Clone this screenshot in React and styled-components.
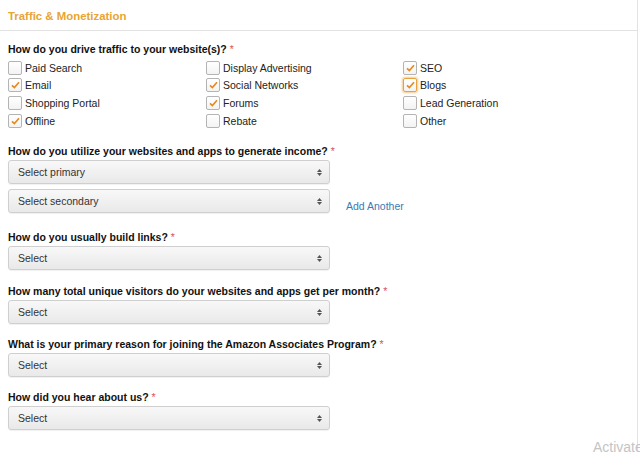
import styled, { createGlobalStyle } from "styled-components";

const GlobalStyle = createGlobalStyle`
  html, body {
    margin: 0;
    padding: 0;
    background: #fff;
    font-family: "Liberation Sans", Arial, sans-serif;
  }
`;

const Page = styled.div`
  position: relative;
  width: 640px;
  height: 452px;
  overflow: hidden;
  background: #fff;
`;

const Panel = styled.div`
  width: 637px;
  height: 452px;
  border-right: 1px solid #e2e2e2;
`;

const Header = styled.div`
  height: 31px;
  border-bottom: 1px solid #e3e3e3;
  display: flex;
  align-items: center;
  padding: 1px 8px 0;
  font-size: 11.4px;
  font-weight: bold;
  color: #e8a531;
  box-sizing: border-box;
`;

const Body = styled.div`
  padding: 11px 8px 0;
`;

const Group = styled.div`
  margin-top: ${(p) => p.$gap || 0}px;
`;

const Question = styled.div`
  font-size: 10.5px;
  font-weight: bold;
  color: #111;
  line-height: 14px;
  margin-bottom: ${(p) => p.$mb ?? 2}px;
`;

const Star = styled.span`
  color: #d9534f;
  font-weight: normal;
  margin-left: 3px;
`;

const CheckGrid = styled.div`
  display: grid;
  grid-template-columns: 198px 197px auto;
  grid-auto-rows: 17.6px;
`;

const CheckItem = styled.label`
  display: flex;
  align-items: center;
  gap: 3px;
  font-size: 10.5px;
  color: #222;
`;

const Box = styled.span`
  width: 12px;
  height: 12px;
  border: 1px solid ${(p) => (p.$focus ? "#e8a13c" : "#b4b4b4")};
  border-radius: 2px;
  background: linear-gradient(#fff, #f3f3f3);
  display: flex;
  align-items: center;
  justify-content: center;
  box-shadow: ${(p) => (p.$focus ? "0 0 2px 1px rgba(232,161,60,0.55)" : "none")};
`;

const SelectRow = styled.div`
  display: flex;
  align-items: center;
  gap: 16px;
  margin-top: ${(p) => p.$mt || 0}px;
`;

const SelectBox = styled.div`
  width: 322px;
  height: 24px;
  box-sizing: border-box;
  border: 1px solid #cfcfcf;
  border-radius: 3px;
  background: linear-gradient(#f8f8f8, #e9e9e9);
  box-shadow: 0 1px 1px rgba(0, 0, 0, 0.06);
  display: flex;
  align-items: center;
  justify-content: space-between;
  padding: 0 7px 0 9px;
  font-size: 10.5px;
  color: #333;
`;

const Arrows = styled.span`
  display: flex;
  flex-direction: column;
  gap: 1px;
`;

const Link = styled.a`
  font-size: 10.5px;
  color: #3a7ab5;
  text-decoration: none;
  margin-top: 10px;
`;

const Watermark = styled.div`
  position: absolute;
  left: 593px;
  top: 439px;
  font-size: 14px;
  color: #c4c4c4;
  white-space: nowrap;
`;

const Check = () => (
  <svg width="9" height="8" viewBox="0 0 9 8">
    <path d="M1 4.3 L3.4 6.6 L8 1.2" fill="none" stroke="#e38a1f" strokeWidth="1.6" />
  </svg>
);

function Checkbox({ label, checked, focus }) {
  return (
    <CheckItem>
      <Box $focus={focus}>{checked && <Check />}</Box>
      {label}
    </CheckItem>
  );
}

function Select({ text }) {
  return (
    <SelectBox>
      {text}
      <Arrows>
        <svg width="5" height="3" viewBox="0 0 5 3">
          <path d="M0 3 L2.5 0 L5 3 Z" fill="#555" />
        </svg>
        <svg width="5" height="3" viewBox="0 0 5 3">
          <path d="M0 0 L2.5 3 L5 0 Z" fill="#555" />
        </svg>
      </Arrows>
    </SelectBox>
  );
}

const sources = [
  { label: "Paid Search" },
  { label: "Display Advertising" },
  { label: "SEO", checked: true },
  { label: "Email", checked: true },
  { label: "Social Networks", checked: true },
  { label: "Blogs", checked: true, focus: true },
  { label: "Shopping Portal" },
  { label: "Forums", checked: true },
  { label: "Lead Generation" },
  { label: "Offline", checked: true },
  { label: "Rebate" },
  { label: "Other" },
];

function App() {
  return (
    <Page>
      <GlobalStyle />
      <Panel>
        <Header>Traffic &amp; Monetization</Header>
        <Body>
          <Question $mb={3}>
            How do you drive traffic to your website(s)?<Star>*</Star>
          </Question>
          <CheckGrid>
            {sources.map((s) => (
              <Checkbox key={s.label} {...s} />
            ))}
          </CheckGrid>

          <Group $gap={15}>
            <Question>
              How do you utilize your websites and apps to generate income?<Star>*</Star>
            </Question>
            <Select text="Select primary" />
            <SelectRow $mt={5}>
              <Select text="Select secondary" />
              <Link href="#">Add Another</Link>
            </SelectRow>
          </Group>

          <Group $gap={17}>
            <Question>
              How do you usually build links?<Star>*</Star>
            </Question>
            <Select text="Select" />
          </Group>

          <Group $gap={14}>
            <Question>
              How many total unique visitors do your websites and apps get per month?<Star>*</Star>
            </Question>
            <Select text="Select" />
          </Group>

          <Group $gap={13}>
            <Question>
              What is your primary reason for joining the Amazon Associates Program?<Star>*</Star>
            </Question>
            <Select text="Select" />
          </Group>

          <Group $gap={13}>
            <Question>
              How did you hear about us?<Star>*</Star>
            </Question>
            <Select text="Select" />
          </Group>
        </Body>
      </Panel>
      <Watermark>Activate Windows</Watermark>
    </Page>
  );
}

export default App;
